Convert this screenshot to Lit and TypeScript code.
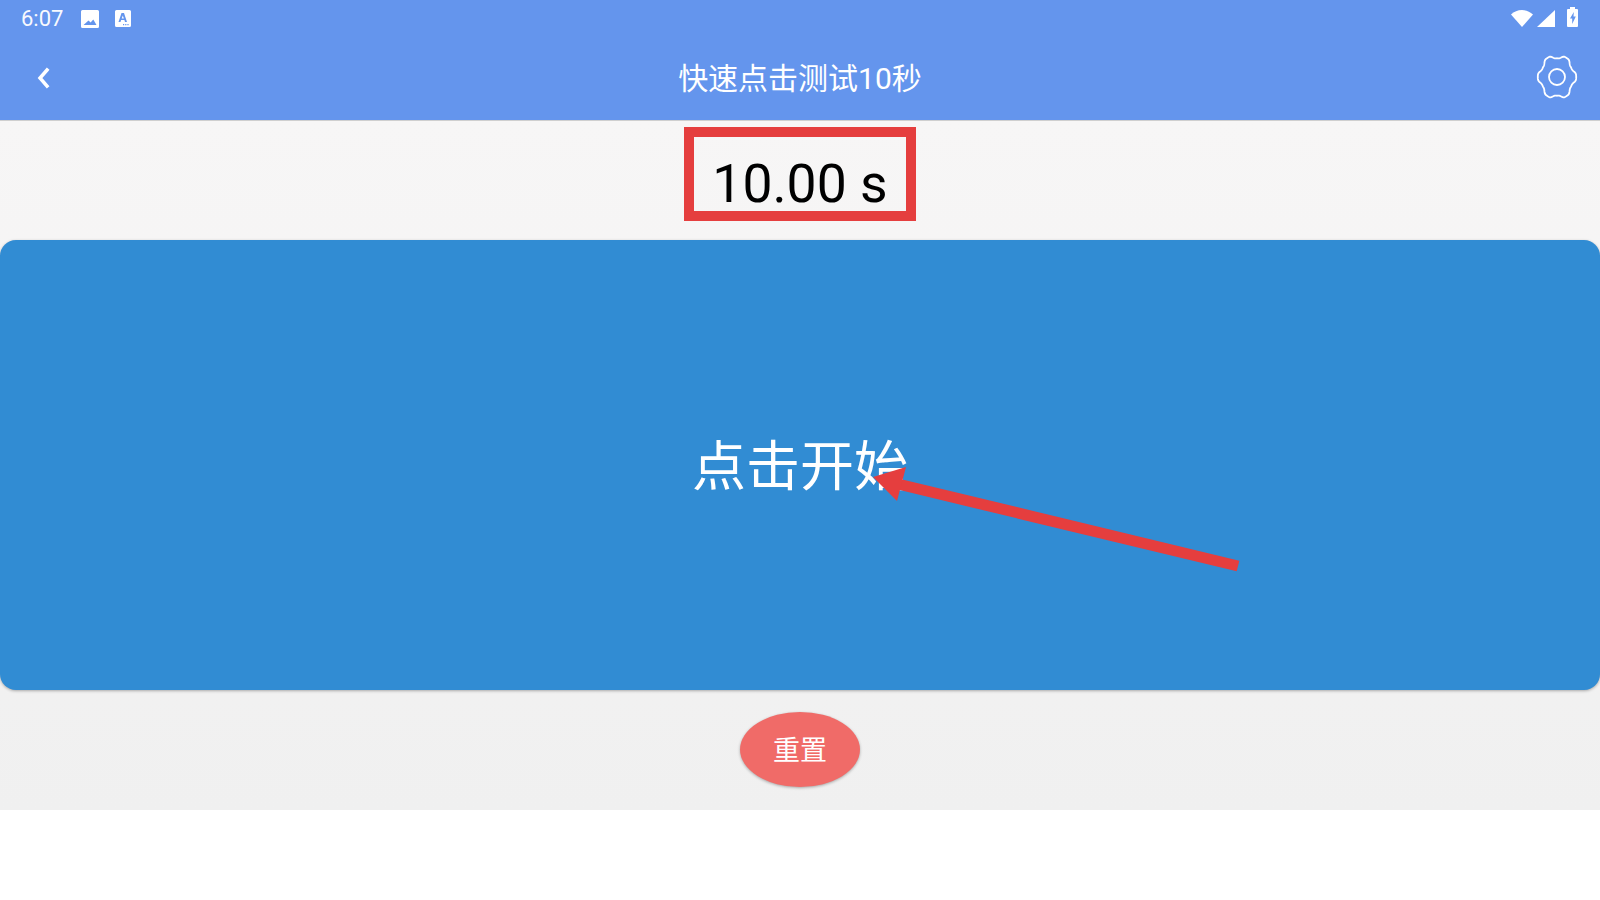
import { LitElement, html, css, svg } from "lit";
import { customElement } from "lit/decorators.js";

const gearPath = (() => {
  const pts: string[] = [];
  const n = 144;
  for (let i = 0; i < n; i++) {
    const t = (i / n) * Math.PI * 2;
    const r = 20.4 + 1.9 * Math.cos(6 * t) - 0.25 * Math.cos(18 * t);
    pts.push(`${(22 + 0.87 * r * Math.cos(t)).toFixed(2)} ${(22 + r * Math.sin(t)).toFixed(2)}`);
  }
  return "M" + pts.join("L") + "Z";
})();

@customElement("app-root")
export class AppRoot extends LitElement {
  static styles = css`
    :host {
      display: block;
      position: relative;
      width: 1600px;
      height: 900px;
      background: #fff;
      overflow: hidden;
      font-family: Roboto, "Noto Sans CJK SC", sans-serif;
    }
    .header {
      background: #6495ed;
      color: #fff;
      height: 120px;
      display: flex;
      flex-direction: column;
    }
    .status {
      height: 48px;
      display: flex;
      align-items: center;
      padding: 0 21px 11px;
      box-sizing: border-box;
    }
    .time {
      font-size: 22px;
      line-height: 36px;
      width: 60px;
      opacity: 0.95;
    }
    .status svg { display: block; flex: none; }
    .a-icon { margin-left: 16px; }
    .spacer { flex: 1; }
    .wifi { margin-right: 4px; margin-top: -1px; }
    .signal { margin-right: 12px; margin-top: -1px; }
    .battery { margin-top: -4px; }
    .status-right { display: flex; align-items: center; margin-right: 1px; }
    .toolbar {
      height: 72px;
      display: grid;
      grid-template-columns: 120px 1fr 120px;
      align-items: center;
    }
    .back { padding-left: 36px; display: flex; margin-top: -12px; }
    .title {
      text-align: center;
      font-size: 30px;
      line-height: 40px;
      font-weight: 400;
      margin-top: -11px;
    }
    .gear-wrap { display: flex; justify-content: flex-end; padding-right: 21px; margin-top: -15px; }
    .content {
      height: 690px;
      box-sizing: border-box;
      border-top: 1px solid #cfcfcf;
      background: linear-gradient(#f7f6f6, #f0f0f0);
      display: flex;
      flex-direction: column;
      align-items: center;
    }
    .timer-row {
      height: 119px;
      box-sizing: border-box;
      padding-top: 6px;
      display: flex;
      justify-content: center;
      width: 100%;
    }
    .timer {
      width: 232px;
      height: 94px;
      box-sizing: border-box;
      border: 10px solid #e53e3e;
      font-size: 53.5px;
      line-height: 94px;
      color: #000;
      text-align: center;
    }
    .panel {
      width: 100%;
      height: 450px;
      box-sizing: border-box;
      padding-bottom: 6px;
      background: #318cd3;
      border-radius: 16px;
      box-shadow: 0 1px 3px rgba(0, 0, 0, 0.3);
      color: #fff;
      font-size: 54px;
      display: flex;
      align-items: center;
      justify-content: center;
    }
    .reset-row {
      flex: 1;
      box-sizing: border-box;
      padding-bottom: 2px;
      display: flex;
      align-items: center;
      justify-content: center;
      width: 100%;
    }
    .reset {
      width: 120px;
      height: 75px;
      box-sizing: border-box;
      padding-bottom: 1px;
      border-radius: 50%;
      background: #f06b68;
      color: #fff;
      font-size: 27px;
      display: flex;
      align-items: center;
      justify-content: center;
      box-shadow: 0 1px 3px rgba(0, 0, 0, 0.3);
    }
    .arrow { position: absolute; left: 0; top: 0; pointer-events: none; }
  `;

  render() {
    return html`
      <div class="header">
        <div class="status">
          <span class="time">6:07</span>
          <svg class="img-icon" width="18" height="18" viewBox="0 0 18 18">
            <path fill="#fff" fill-rule="evenodd" d="M1.500 0h15a1.500 1.500 0 0 1 1.500 1.500v15a1.500 1.500 0 0 1-1.500 1.500h-15A1.500 1.500 0 0 1 0 16.500v-15A1.500 1.500 0 0 1 1.500 0zM2.500 15h13l-3.200-5.500-2.700 3-2.100-2z"/>
          </svg>
          <svg class="a-icon" width="16" height="17" viewBox="0 0 16 17">
            <path fill="#fff" fill-rule="evenodd" d="M1.500 0h13a1.500 1.500 0 0 1 1.500 1.500v14a1.500 1.500 0 0 1-1.500 1.500h-13A1.500 1.500 0 0 1 0 15.500v-14A1.500 1.500 0 0 1 1.500 0zM6.500 3 3.500 12h2l.6-2h3.300l.6 2h2l-3-9zM7.800 5.500l1.100 3H6.700zM8 14h1.200v1.200H8zM10.200 14h1.200v1.200h-1.200zM12.400 14h1.200v1.200h-1.200z"/>
          </svg>
          <div class="spacer"></div>
          <div class="status-right">
            <svg class="wifi" width="22" height="17" viewBox="0 0 22 17">
              <path fill="#fff" d="M11 17 0 4.500C3 1.700 6.800 0 11 0s8 1.700 11 4.500z"/>
            </svg>
            <svg class="signal" width="18" height="17" viewBox="0 0 18 17">
              <path fill="#fff" d="M0 17 18 0v17z"/>
            </svg>
            <svg class="battery" width="11" height="20" viewBox="0 0 11 20">
              <path fill="#fff" fill-rule="evenodd" d="M3 0h5v2h2a1 1 0 0 1 1 1v16a1 1 0 0 1-1 1H1a1 1 0 0 1-1-1V3a1 1 0 0 1 1-1h2zM6.800 5 3 11.500h2.200V17L8.800 9.500H6.500z"/>
            </svg>
          </div>
        </div>
        <div class="toolbar">
          <div class="back">
            <svg width="16" height="22" viewBox="0 0 16 22">
              <polyline points="11,3 4,11 11,19" fill="none" stroke="#fff" stroke-width="3.500" stroke-linecap="square"/>
            </svg>
          </div>
          <div class="title">快速点击测试10秒</div>
          <div class="gear-wrap">
            <svg width="44" height="44" viewBox="0 0 44 44" fill="none" stroke="#fff" stroke-width="1.800">
              <path d=${gearPath}/>
              <circle cx="22" cy="22" r="8"/>
            </svg>
          </div>
        </div>
      </div>
      <div class="content">
        <div class="timer-row"><div class="timer">10.00 s</div></div>
        <div class="panel">点击开始</div>
        <div class="reset-row"><div class="reset">重置</div></div>
      </div>
      <svg class="arrow" width="1600" height="900" viewBox="0 0 1600 900">
        ${svg`<line x1="1238" y1="566" x2="900" y2="484.500" stroke="#e53e3e" stroke-width="11"/>
        <polygon points="873,477 906,467 897,501" fill="#e53e3e"/>`}
      </svg>
    `;
  }
}
